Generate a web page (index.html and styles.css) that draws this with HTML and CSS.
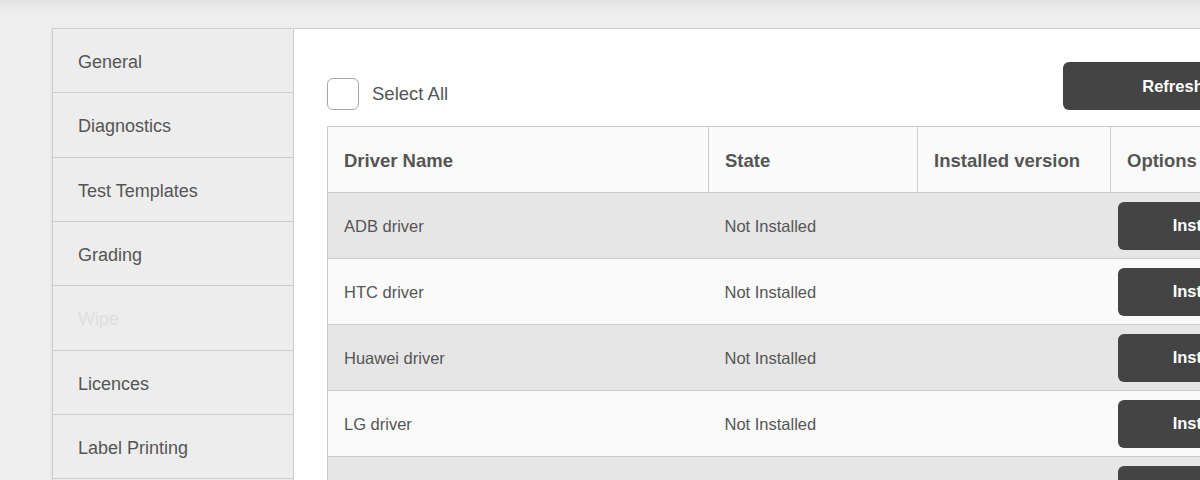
FILE: index.html
```html
<!DOCTYPE html>
<html>
<head>
<meta charset="utf-8">
<link rel="stylesheet" href="styles.css">
</head>
<body>
<div class="page">
  <nav class="sidebar">
    <div class="nav-item">General</div>
    <div class="nav-item">Diagnostics</div>
    <div class="nav-item">Test Templates</div>
    <div class="nav-item">Grading</div>
    <div class="nav-item disabled">Wipe</div>
    <div class="nav-item">Licences</div>
    <div class="nav-item">Label Printing</div>
  </nav>
  <main class="content">
    <div class="toolbar">
      <label class="select-all"><span class="checkbox"></span><span>Select All</span></label>
      <button class="btn refresh">Refresh</button>
    </div>
    <table class="drivers">
      <colgroup>
        <col class="c1"><col class="c2"><col class="c3"><col class="c4">
      </colgroup>
      <thead>
        <tr><th>Driver Name</th><th>State</th><th>Installed version</th><th>Options</th></tr>
      </thead>
      <tbody>
        <tr><td>ADB driver</td><td>Not Installed</td><td></td><td class="opt"><button class="btn install">Install</button></td></tr>
        <tr><td>HTC driver</td><td>Not Installed</td><td></td><td class="opt"><button class="btn install">Install</button></td></tr>
        <tr><td>Huawei driver</td><td>Not Installed</td><td></td><td class="opt"><button class="btn install">Install</button></td></tr>
        <tr><td>LG driver</td><td>Not Installed</td><td></td><td class="opt"><button class="btn install">Install</button></td></tr>
        <tr><td>Motorola driver</td><td>Not Installed</td><td></td><td class="opt"><button class="btn install">Install</button></td></tr>
      </tbody>
    </table>
  </main>
</div>
</body>
</html>
```
FILE: styles.css
```css
html, body {
  margin: 0;
  height: 100%;
  overflow: hidden;
}
body {
  background: linear-gradient(#e2e2e2 0, #ededed 10px, #eeeeee 12px);
  font-family: "Liberation Sans", Arial, sans-serif;
  color: #555;
}
.page {
  display: flex;
  padding: 28px 0 0 52px;
  width: 1400px;
}
.sidebar {
  width: 240px;
  flex: none;
  background: #ededed;
  border: 1px solid #cccccc;
  border-bottom: none;
  box-shadow: -1px 0 2px rgba(0,0,0,0.05);
}
.nav-item {
  box-sizing: border-box;
  height: 64.33px;
  border-bottom: 1px solid #cccccc;
  padding: 4px 0 0 25px;
  display: flex;
  align-items: center;
  font-size: 18px;
  color: #555;
}
.nav-item.disabled {
  color: #dedede;
}
.content {
  flex: 1;
  background: #fff;
  border-top: 1px solid #cccccc;
  padding: 33px 0 0 33px;
}
.toolbar {
  display: flex;
  align-items: flex-end;
  justify-content: space-between;
  width: 956px;
  margin-bottom: 16px;
}
.select-all {
  display: flex;
  align-items: center;
  gap: 13px;
  font-size: 18.5px;
  color: #555;
}
.checkbox {
  width: 30px;
  height: 30px;
  border: 1px solid #a6a6a6;
  border-radius: 6px;
  background: #fff;
}
.btn {
  font-family: "Liberation Sans", Arial, sans-serif;
  background: #444444;
  color: #fff;
  border: none;
  border-radius: 6px;
  font-size: 16.5px;
  font-weight: 700;
  height: 48px;
  padding: 0;
}
.refresh {
  width: 220px;
}
.drivers {
  border-collapse: collapse;
  table-layout: fixed;
  width: 1023px;
  border: 1px solid #cccccc;
}
.c1 { width: 381px; }
.c2 { width: 209px; }
.c3 { width: 193px; }
.c4 { width: 240px; }
.drivers th {
  box-sizing: border-box;
  height: 66px;
  background: #fafafa;
  text-align: left;
  font-size: 18.5px;
  font-weight: 700;
  color: #555;
  padding: 3px 0 0 16px;
  border-right: 1px solid #cccccc;
  border-bottom: 1px solid #cccccc;
}
.drivers td {
  box-sizing: border-box;
  height: 66px;
  padding: 2px 0 0 16px;
  font-size: 16.5px;
  color: #555;
  border-bottom: 1px solid #cccccc;
}
.drivers tbody tr:nth-child(odd) td {
  background: #e6e6e6;
}
.drivers tbody tr:nth-child(even) td {
  background: #fafafa;
}
.drivers td.opt {
  padding: 0 0 0 7px;
}
.install {
  width: 158px;
  display: block;
}
```
